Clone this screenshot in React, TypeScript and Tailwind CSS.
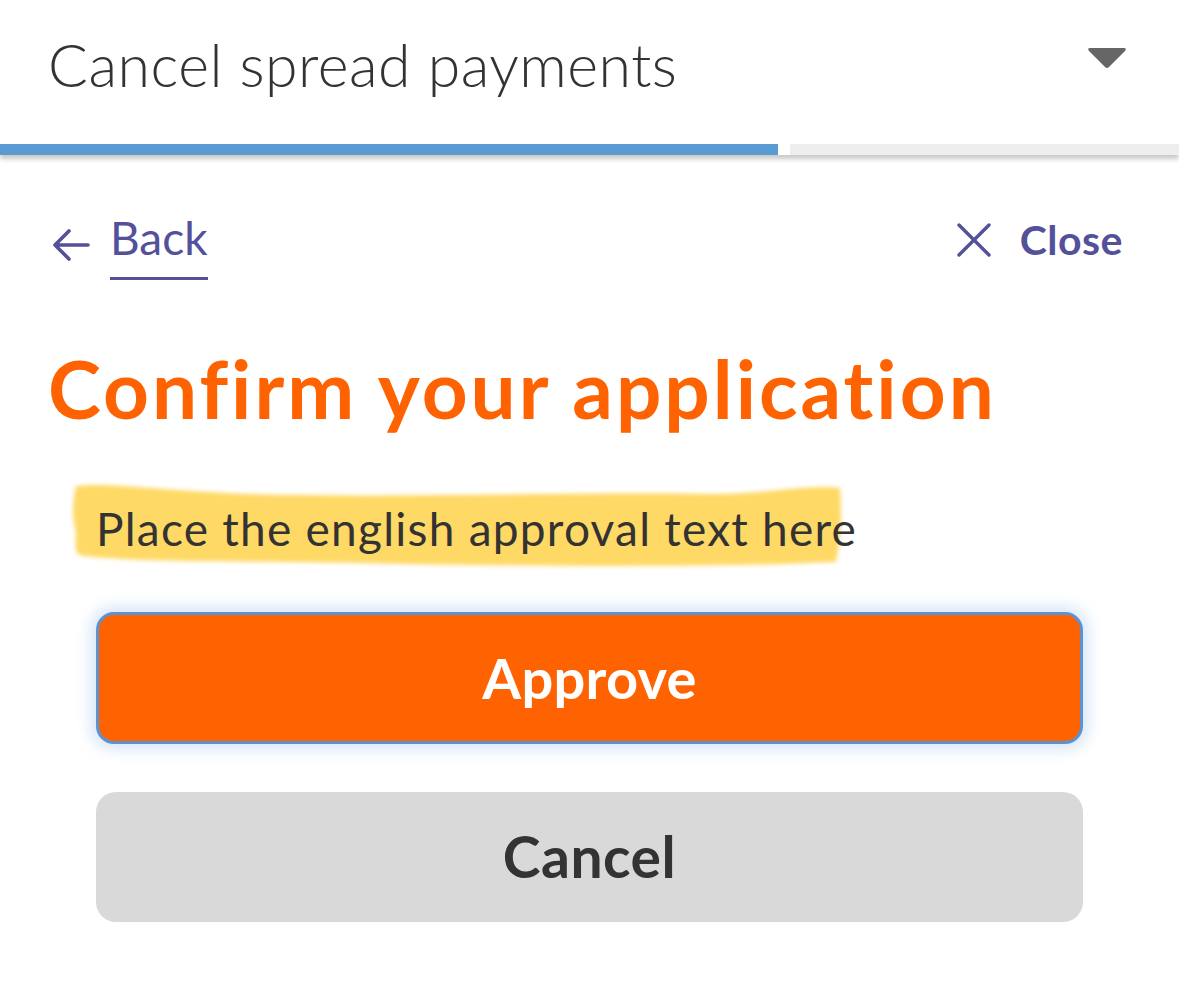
const FONT = "font-['Lato','Noto_Sans',sans-serif]";

function Header() {
  return (
    <div className="relative">
      <div className="flex h-[144px] items-center justify-between pl-[48px] pr-[52px]">
        <h1 className="-mt-[16px] text-[59px] font-light leading-none tracking-[0.5px] text-[#333333]">
          Cancel spread payments
        </h1>
        <svg width="40" height="24" viewBox="0 0 40 24" className="-mt-[28px]">
          <path d="M3 2 H37 Q40 2 38 5 L22 21 Q20 23 18 21 L2 5 Q0 2 3 2 Z" fill="#666666" />
        </svg>
      </div>
      <div className="flex h-[11px] gap-[12px] shadow-[0_4px_5px_rgba(0,0,0,0.22)]">
        <div className="w-[778px] bg-[#5a9bd3]" />
        <div className="flex-1 bg-[#eeeeee]" />
      </div>
    </div>
  );
}

export default function App() {
  return (
    <div className={`${FONT} min-h-[1000px] w-[1179px] bg-white`}>
      <Header />
      <div className="flex items-start justify-between pl-[52px] pr-[56px] pt-[56px]">
        <a className="flex items-center gap-[20px] text-[#54509a]">
          <svg width="38" height="34" viewBox="0 0 38 34" fill="none" stroke="currentColor" strokeWidth="3.6" strokeLinecap="round" strokeLinejoin="round" className="-mt-[2px]">
            <path d="M36 17 H3 M17 3 L3 17 L17 31" />
          </svg>
          <span className="border-b-[3px] border-[#54509a] pb-[12px] text-[46px] leading-[54px]">Back</span>
        </a>
        <button className="mt-[8px] flex items-center gap-[29px] text-[#54509a]">
          <svg width="34" height="34" viewBox="0 0 34 34" fill="none" stroke="currentColor" strokeWidth="3.4" strokeLinecap="round">
            <path d="M2 2 L32 32 M32 2 L2 32" />
          </svg>
          <span className="text-[41px] font-bold leading-none tracking-[0.5px]">Close</span>
        </button>
      </div>
      <h2 className="pl-[48px] pt-[68px] text-[80px] font-bold leading-none tracking-[3px] text-[#ff6200]">
        Confirm your application
      </h2>
      <div className="relative ml-[70px] mt-[78px] w-[790px]">
        <svg
          className="absolute left-0 top-[-24px] blur-[2px]"
          width="775"
          height="88"
          viewBox="0 0 775 88"
        >
          <path
            d="M6 4 C40 0 80 8 180 12 C320 16 480 10 640 12 C700 12 740 2 770 6 C772 30 771 58 766 80 C640 86 470 84 330 82 C200 78 90 82 14 74 C8 72 4 74 6 52 C2 36 2 20 6 4 Z"
            fill="#ffd965"
          />
        </svg>
        <p className="relative pl-[26px] text-[46px] leading-none tracking-[1.25px] text-[#333333]">
          Place the english approval text here
        </p>
      </div>
      <div className="flex flex-col gap-[48px] px-[96px] pt-[60px]">
        <button className="flex h-[132px] items-center justify-center rounded-[18px] border-[3px] border-[#5b92cf] bg-[#ff6200] text-[56px] font-bold tracking-[0.3px] text-white shadow-[0_0_14px_6px_rgba(120,170,230,0.28)]">
          Approve
        </button>
        <button className="flex h-[130px] items-center justify-center rounded-[20px] bg-[#d9d9d9] text-[57px] font-bold tracking-[0.5px] text-[#333333]">
          Cancel
        </button>
      </div>
    </div>
  );
}
